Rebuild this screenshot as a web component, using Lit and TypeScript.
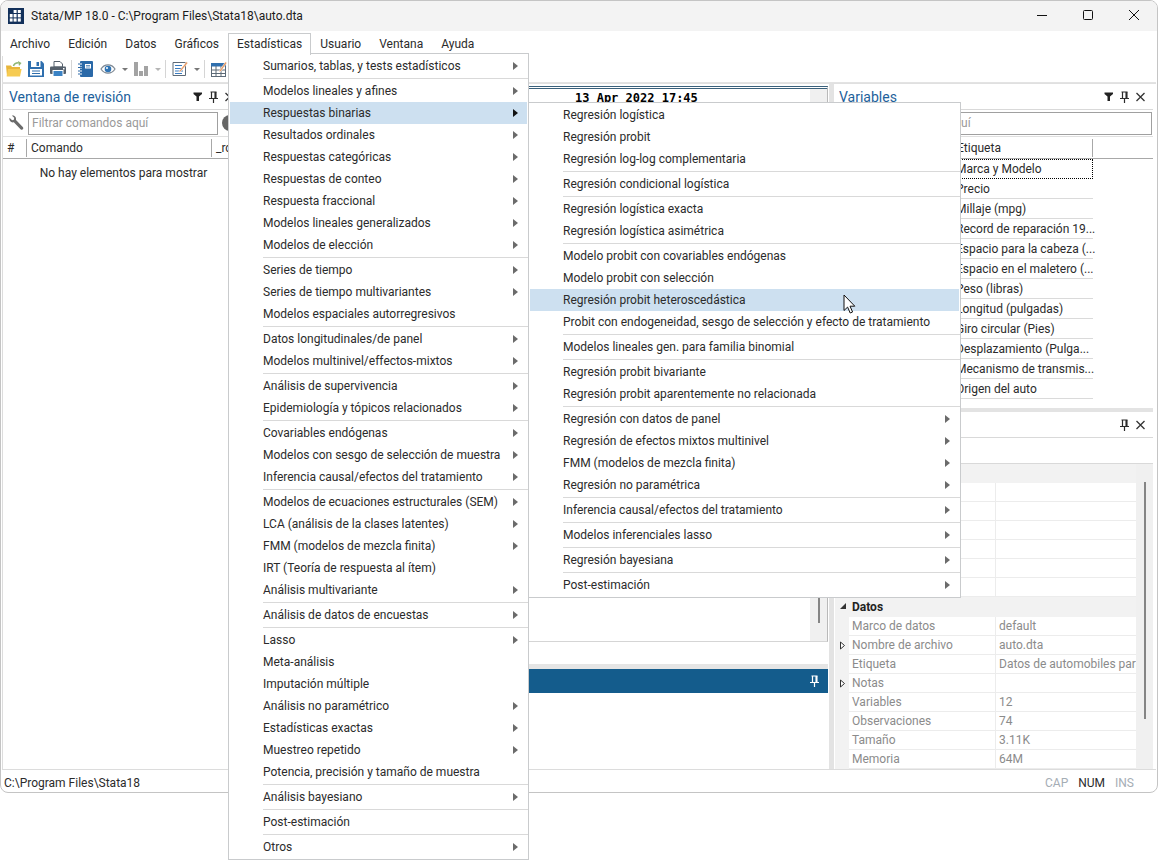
import { LitElement, html, css, svg, nothing } from "lit";
import { customElement, property } from "lit/decorators.js";
import { classMap } from "lit/directives/class-map.js";

interface Entry {
  label: string;
  sub?: boolean;
  active?: boolean;
  children?: Group[];
  pointer?: boolean;
}
type Group = Entry[];

/* A trailing ">" marks an entry that opens a submenu. */
const group = (...labels: string[]): Group =>
  labels.map((l) => (l.endsWith(">") ? { label: l.slice(0, -1), sub: true } : { label: l }));

const binaryMenu: Group[] = [
  group("Regresión logística", "Regresión probit", "Regresión log-log complementaria"),
  group("Regresión condicional logística"),
  group("Regresión logística exacta", "Regresión logística asimétrica"),
  [
    { label: "Modelo probit con covariables endógenas" },
    { label: "Modelo probit con selección" },
    { label: "Regresión probit heteroscedástica", active: true, pointer: true },
    { label: "Probit con endogeneidad, sesgo de selección y efecto de tratamiento" },
  ],
  group("Modelos lineales gen. para familia binomial"),
  group("Regresión probit bivariante", "Regresión probit aparentemente no relacionada"),
  group(
    "Regresión con datos de panel>",
    "Regresión de efectos mixtos multinivel>",
    "FMM (modelos de mezcla finita)>",
    "Regresión no paramétrica>"
  ),
  group("Inferencia causal/efectos del tratamiento>"),
  group("Modelos inferenciales lasso>"),
  group("Regresión bayesiana>"),
  group("Post-estimación>"),
];

const statisticsMenu: Group[] = [
  group("Sumarios, tablas, y tests estadísticos>"),
  [
    { label: "Modelos lineales y afines", sub: true },
    { label: "Respuestas binarias", sub: true, active: true, children: binaryMenu },
    ...group(
      "Resultados ordinales>",
      "Respuestas categóricas>",
      "Respuestas de conteo>",
      "Respuesta fraccional>",
      "Modelos lineales generalizados>",
      "Modelos de elección>"
    ),
  ],
  group("Series de tiempo>", "Series de tiempo multivariantes>", "Modelos espaciales autorregresivos"),
  group("Datos longitudinales/de panel>", "Modelos multinivel/effectos-mixtos>"),
  group("Análisis de supervivencia>", "Epidemiología y tópicos relacionados>"),
  group(
    "Covariables endógenas>",
    "Modelos con sesgo de selección de muestra>",
    "Inferencia causal/efectos del tratamiento>"
  ),
  group(
    "Modelos de ecuaciones estructurales (SEM)>",
    "LCA (análisis de la clases latentes)>",
    "FMM (modelos de mezcla finita)>",
    "IRT (Teoría de respuesta al ítem)",
    "Análisis multivariante>"
  ),
  group("Análisis de datos de encuestas>"),
  group(
    "Lasso>",
    "Meta-análisis",
    "Imputación múltiple",
    "Análisis no paramétrico>",
    "Estadísticas exactas>",
    "Muestreo repetido>",
    "Potencia, precisión y tamaño de muestra"
  ),
  group("Análisis bayesiano>"),
  group("Post-estimación"),
  group("Otros>"),
];

const variableLabels = [
  "Marca y Modelo",
  "Precio",
  "Millaje (mpg)",
  "Record de reparación 19...",
  "Espacio para la cabeza (...",
  "Espacio en el maletero (...",
  "Peso (libras)",
  "Longitud (pulgadas)",
  "Giro circular (Pies)",
  "Desplazamiento (Pulga...",
  "Mecanismo de transmis...",
  "Origen del auto",
];

const dataProps: { name: string; value: string; nested?: boolean }[] = [
  { name: "Marco de datos", value: "default" },
  { name: "Nombre de archivo", value: "auto.dta", nested: true },
  { name: "Etiqueta", value: "Datos de automobiles para" },
  { name: "Notas", value: "", nested: true },
  { name: "Variables", value: "12" },
  { name: "Observaciones", value: "74" },
  { name: "Tamaño", value: "3.11K" },
  { name: "Memoria", value: "64M" },
];

const icon = (body: unknown, w = 16, h = 16) =>
  html`<svg width=${w} height=${h} viewBox="0 0 ${w} ${h}" aria-hidden="true">${body}</svg>`;

const icons = {
  logo: icon(svg`<rect width="16" height="16" fill="#12305a"/>
    <g fill="#fff"><rect x="5.6" y="2" width="3" height="3"/><rect x="9.8" y="2" width="3" height="3"/>
    <rect x="1.8" y="6" width="2.8" height="3.4"/><rect x="5.6" y="6" width="3" height="3.4"/><rect x="9.8" y="6" width="3" height="3.4"/>
    <rect x="1.8" y="10.4" width="2.8" height="3.2"/><rect x="5.6" y="10.4" width="3" height="3.2"/><rect x="9.8" y="10.4" width="3" height="3.2"/></g>`),
  minimize: icon(svg`<path d="M3 7.500h10" stroke="#111"/>`),
  maximize: icon(svg`<rect x="3.500" y="2.500" width="9" height="9" rx="1" fill="none" stroke="#111"/>`),
  close: icon(svg`<path d="M3 2l10 10M13 2L3 12" stroke="#111"/>`),
  open: icon(svg`<path d="M0 4.500h5l1 1.500h8v9H1z" fill="#e8b53a"/><path d="M2 8h13.600L14 15.600H.6z" fill="#f6cb52"/>
    <path d="M7.500 5c.6-2.400 2.500-3.200 5-3.200" stroke="#8fb573" stroke-width="1.600" fill="none"/><path d="M12 0l3.500 2-2.500 3z" fill="#8fb573"/>`),
  save: icon(svg`<path d="M0 0h13.500L16 2.500V16H0z" fill="#2f6fae"/><rect x="3" y="0" width="9.500" height="6" fill="#fff"/><rect x="8.500" y="1" width="2.500" height="4" fill="#2f6fae"/>
    <rect x="2" y="8" width="12" height="6.500" fill="#fff"/><path d="M4 10h8M4 12.500h8" stroke="#2f6fae"/>`),
  print: icon(svg`<path d="M4 .5h6l2.500 2.500V6H4z" fill="#fff" stroke="#55606c"/><rect x="0" y="5.500" width="16" height="7.500" rx="1" fill="#55606c"/>
    <rect x="3" y="9.500" width="10" height="6" fill="#3a82c4" stroke="#fff"/><rect x="13" y="7" width="1.500" height="1.500" fill="#fff"/>`),
  log: icon(svg`<rect x="2" y="0" width="13" height="16" rx="1" fill="#2a69a8"/><rect x="7" y="3" width="6" height="4.500" fill="#fff"/><path d="M8 4.500h4M8 6h4" stroke="#2a69a8" stroke-width=".7"/>
    <path d="M0 3h4M0 6.500h4M0 10h4M0 13h4" stroke="#fff" stroke-width="2"/><path d="M0 3h4M0 6.500h4M0 10h4M0 13h4" stroke="#2a69a8"/>`),
  eye: icon(svg`<path d="M1 8c3.500-5.500 10.500-5.500 14 0-3.500 5.500-10.500 5.500-14 0z" fill="#fff" stroke="#7e8994" stroke-width="1.200"/><circle cx="8" cy="8" r="3.300" fill="#2f74b5"/><circle cx="7" cy="7" r="1" fill="#fff"/>`),
  chart: icon(svg`<path d="M1 1h4v14H1zM6 10h4v5H6zM11 5h4v10h-4z" fill="#a3a3a3"/>`),
  edit: icon(svg`<path d="M1 1.500h12.500v13H1z" fill="#fff" stroke="#5d6a77"/><path d="M3 4.500h7M3 7.500h8M3 10h8M3 12.500h7" stroke="#3a7cc0"/><path d="M7.500 9.500L14.500 .7l1.400 1.200L8.800 10.500l-2.200.8z" fill="#e99a62" stroke="#fff" stroke-width=".5"/>`),
  grid: icon(svg`<rect x=".5" y="2.500" width="14" height="13" fill="#fff" stroke="#5d6a77"/><path d="M0 2h15v3.500H0z" fill="#2f6fae"/><path d="M.5 9h14M.5 12.500h14M5 5v10M10 5v10" stroke="#5d6a77"/><path d="M8.500 9.500L14.500 .7l1.400 1.200L10 10.300l-2 .8z" fill="#e99a62" stroke="#fff" stroke-width=".5"/>`),
  wrench: icon(svg`<path d="M1.500 2.800l2.600 2.400 1.800-.5.300-1.900L3.800.6C6 0 8.600 1.600 8 5l7 7.200c1 1.500-.8 3.300-2.200 2.200L5.800 7.300C3 8 .8 5.500 1.500 2.800z" fill="#6b6b6b"/>`),
  filter: icon(svg`<path d="M1.500 1.500h8.500v1.500L7 5.500V10H4.500V5.500L1.500 3z" fill="#222"/>`, 11, 12),
  pin: icon(svg`<path d="M2.500 1h6M3.500 1v6M7.500 1v6M1 7.500h9M5.500 8v4" fill="none" stroke="currentColor" stroke-width="1.200"/><path d="M6.500 1h2v6h-2z" fill="currentColor"/>`, 11, 12),
  cross: icon(svg`<path d="M1.500 2l8 8M9.500 2l-8 8" stroke="#333" stroke-width="1.300"/>`, 11, 12),
  closed: icon(svg`<path d="M1.500 1v7l4-3.500z" fill="#fff" stroke="#333"/>`, 8, 9),
  opened: icon(svg`<path d="M7 1v6H1z" fill="#333"/>`, 8, 9),
};

const base = css`
  * { box-sizing: border-box; }
  button {
    font: inherit;
    color: inherit;
    background: none;
    border: 0;
    margin: 0;
    padding: 0;
    text-align: left;
    white-space: nowrap;
  }
  svg { display: block; flex: none; }
`;

@customElement("menu-list")
class MenuList extends LitElement {
  @property({ attribute: false }) groups: Group[] = [];

  static styles = [
    base,
    css`
      :host {
        display: block;
        background: #fff;
        border: 1px solid #c9cbcd;
        padding: 1px 0;
        color: #2b2b2b;
      }
      .group + .group::before {
        content: "";
        display: block;
        height: 1px;
        margin: 1px 0 1px 34px;
        background: #d9d9d9;
      }
      .slot { position: relative; padding: 0 1px; }
      .item {
        display: flex;
        align-items: center;
        justify-content: space-between;
        width: 100%;
        height: 22px;
        padding: 0 9px 0 33px;
      }
      .item.active { background: #cde0f0; }
      .arrow {
        border: 4px solid transparent;
        border-left: 5px solid #6b6b6b;
        border-right: 0;
      }
      .active .arrow { border-left-color: #111; }
      .child { position: absolute; z-index: 2; top: 0; left: 100%; width: 433px; }
      .pointer { position: absolute; top: 5px; left: 314px; }
    `,
  ];

  render() {
    return this.groups.map(
      (g) => html`<div class="group" role="group">
        ${g.map(
          (e) => html`<div class="slot">
            <button class=${classMap({ item: true, active: !!e.active })} role="menuitem">
              <span>${e.label}</span>
              ${e.sub ? html`<span class="arrow"></span>` : nothing}
            </button>
            ${e.children ? html`<menu-list class="child" role="menu" .groups=${e.children}></menu-list>` : nothing}
            ${e.pointer
              ? html`<svg class="pointer" width="13" height="20" viewBox="0 0 13 20" aria-hidden="true">
                  <path d="M1 1v15.500l3.600-3.400 2.600 5.900 2.400-1-2.600-5.800h4.800z" fill="#fff" stroke="#111" />
                </svg>`
              : nothing}
          </div>`
        )}
      </div>`
    );
  }
}

@customElement("app-root")
class AppRoot extends LitElement {
  static styles = [
    base,
    css`
      :host {
        display: block;
        min-height: 100vh;
        background: #fff;
        font: 12px/16px Roboto, "Open Sans", sans-serif;
        color: #2b2b2b;
      }
      .window {
        display: flex;
        flex-direction: column;
        height: calc(100vh - 67px);
        min-height: 620px;
        border: 1px solid #c4c4c4;
        border-radius: 8px;
      }
      .titlebar {
        display: flex;
        align-items: center;
        height: 30px;
        padding: 0 7px;
        gap: 7px;
        background: #f3f3f3;
        border-radius: 7px 7px 0 0;
        color: #1b1b1b;
      }
      .title { flex: 1; }
      .winbuttons { display: flex; gap: 30px; padding-right: 8px; }
      .menubar { display: flex; height: 25px; padding-top: 2px; }
      .top { position: relative; }
      .top > button { height: 22px; padding: 0 9px; }
      .top.open > button {
        position: relative;
        z-index: 3;
        padding: 0 8px 1px;
        border: 1px solid #c9cbcd;
        border-bottom: 0;
        background: #fff;
      }
      .dropdown { position: absolute; z-index: 2; top: 20px; left: 0; width: 301px; }
      .toolbar {
        display: flex;
        align-items: center;
        height: 27px;
        margin: 0 1px;
        border-left: 1px solid #ddd;
        border-bottom: 1px solid #e3e3e3;
      }
      .tool { display: grid; place-items: center; width: 22px; height: 22px; }
      .caret { border: 3px solid transparent; border-top-color: #777; border-bottom: 0; margin: 0 2px 0 3px; }
      .caret.dim { border-top-color: #b5b5b5; }
      .rule { width: 1px; height: 18px; margin: 0 3px 0 2px; background: #d5d5d5; }

      .body {
        flex: 1;
        min-height: 0;
        display: grid;
        grid-template-columns: 242px minmax(0, 1fr) 327px;
        margin: 0 1px;
        border-bottom: 1px solid #dcdcdc;
      }
      .panel { min-width: 0; min-height: 0; display: flex; flex-direction: column; border-top: 1px solid #e0e0e0; }
      .left { border-left: 1px solid #ddd; }
      .phead {
        flex: none;
        display: flex;
        align-items: center;
        gap: 5px;
        height: 26px;
        padding: 0 9px 0 6px;
        border-bottom: 1px solid #d9d9d9;
      }
      .phead h2 { flex: 1; margin: 0; font-size: 14px; line-height: 18px; font-weight: 400; color: #1d619b; }
      .filterbar {
        flex: none;
        display: flex;
        align-items: center;
        gap: 4px;
        height: 27px;
        padding: 0 5px;
        border-bottom: 1px solid #e0e0e0;
      }
      .right .filterbar { padding-right: 1px; }
      .filterbar input {
        flex: 1;
        min-width: 0;
        height: 23px;
        padding: 0 3px;
        border: 1px solid #a0a0a0;
        font: inherit;
      }
      input::placeholder { color: #9a9a9a; opacity: 1; }
      .search { width: 16px; height: 16px; border-radius: 8px; background: #666; margin-right: 1px; }
      table { border-collapse: separate; border-spacing: 0; table-layout: fixed; width: 100%; }
      th, td { padding: 0; font-weight: 400; text-align: left; white-space: nowrap; overflow: hidden; }
      .cols th { height: 22px; padding-left: 4px; border-bottom: 1px solid #a8a8a8; }
      .cols th:not(:last-child) {
        background: linear-gradient(#a8a8a8, #a8a8a8) right 2px / 1px 18px no-repeat;
      }
      .history .n { width: 24px; }
      .history .cmd { width: 185px; }
      .empty { margin: 0; padding: 6px 0; text-align: center; }

      .center {
        display: flex;
        flex-direction: column;
        min-width: 0;
        padding: 2px 1px 0 0;
        border-top: 1px solid #e0e0e0;
      }
      .results {
        flex: 1;
        min-height: 0;
        display: flex;
        justify-content: space-between;
        border-top: 3px double #3b617c;
        border-right: 1px solid #b9b9b9;
        border-bottom: 1px solid #d5d5d5;
        padding-left: 331px;
      }
      .results pre { margin: 1px 0; font: bold 12px/16px "DejaVu Sans Mono", monospace; color: #000; }
      .track { display: flex; justify-content: center; width: 17px; background: #f0f0f0; }
      .thumb { width: 2px; background: #858585; margin: 14px 0 18px; }
      .gap { height: 22px; }
      .split { height: 5px; background: #e5e5e5; }
      .command {
        height: 24px;
        display: flex;
        align-items: center;
        justify-content: flex-end;
        padding-right: 8px;
        background: #145c8c;
        color: #fff;
      }
      .entry { height: 76px; border: 0; padding: 0; resize: none; outline: none; }

      .right { border-left: 5px solid #e3e3e3; padding-right: 3px; }
      .right .phead { padding: 0 7px 0 5px; }
      .vars { flex: 1 1 249px; min-height: 0; overflow: hidden; }
      .vars .name { width: 119px; }
      .vars .label { width: 140px; }
      .vars td { height: 20px; padding-left: 3px; border-bottom: 1px solid #dadada; overflow: visible; }
      .vars td:last-child { border: 0; }
      .vars .selected td { border: 1px dotted #000; border-left: 0; }
      .vars .selected td:first-child { border-right: 0; }
      .vars .selected td:last-child { border: 0; }
      .splitter { flex: none; height: 4px; background: #e3e3e3; }
      .lockbar { flex: none; height: 26px; border-bottom: 1px solid #d9d9d9; }
      .propbox { flex: none; display: flex; height: 305px; margin-left: 1px; }
      .props { flex: 1; min-width: 0; color: #8b8b8b; }
      .props .gutter { width: 14px; background: #f2f2f2; border: 0; padding-left: 4px; }
      .props .pname { width: 147px; }
      .props td { height: 19px; padding-left: 3px; border-bottom: 1px solid #ececec; }
      .props td + td { border-right: 1px solid #ececec; }
      .props td:last-child { border-right: 0; }
      .props .section td, .props .section th { height: 19px; background: #f2f2f2; border: 0; font-weight: 700; color: #222; padding-left: 3px; }
      .props .section td.gutter { padding-left: 4px; }
      .propbox .thumb { margin: 18px 0 50px; }

      .status { display: flex; align-items: center; gap: 10px; height: 22px; padding: 3px 23px 0 3px; }
      .status .path { flex: 1; }
      .off { color: #a5adb5; }
    `,
  ];

  private tool(name: string, glyph: unknown) {
    return html`<button class="tool" aria-label=${name}>${glyph}</button>`;
  }

  private menu(label: string) {
    return html`<div class="top"><button>${label}</button></div>`;
  }

  render() {
    return html`<main class="window">
      <header class="titlebar">
        ${icons.logo}
        <span class="title">Stata/MP 18.0 - C:\\Program Files\\Stata18\\auto.dta</span>
        <div class="winbuttons">
          <button aria-label="Minimizar">${icons.minimize}</button>
          <button aria-label="Maximizar">${icons.maximize}</button>
          <button aria-label="Cerrar">${icons.close}</button>
        </div>
      </header>
      <nav class="menubar">
        ${["Archivo", "Edición", "Datos", "Gráficos"].map(this.menu)}
        <div class="top open">
          <button aria-expanded="true">Estadísticas</button>
          <menu-list class="dropdown" role="menu" .groups=${statisticsMenu}></menu-list>
        </div>
        ${["Usuario", "Ventana", "Ayuda"].map(this.menu)}
      </nav>
      <div class="toolbar">
        ${this.tool("Abrir", icons.open)} ${this.tool("Guardar", icons.save)} ${this.tool("Imprimir", icons.print)}
        <span class="rule"></span>
        ${this.tool("Log", icons.log)} ${this.tool("Visor", icons.eye)}<span class="caret"></span>
        ${this.tool("Gráfico", icons.chart)}<span class="caret dim"></span>
        <span class="rule"></span>
        ${this.tool("Editor", icons.edit)}<span class="caret"></span>
        <span class="rule"></span>
        ${this.tool("Datos", icons.grid)}
      </div>
      <div class="body">
        <section class="panel left">
          <div class="phead">
            <h2>Ventana de revisión</h2>
            <button aria-label="Filtro">${icons.filter}</button>
            <button aria-label="Fijar">${icons.pin}</button>
            <button aria-label="Cerrar">${icons.cross}</button>
          </div>
          <div class="filterbar">
            ${icons.wrench}
            <input type="text" aria-label="Filtrar comandos" placeholder="Filtrar comandos aquí" />
            <span class="search"></span>
          </div>
          <table class="history">
            <thead>
              <tr class="cols"><th class="n">#</th><th class="cmd">Comando</th><th>_rc</th></tr>
            </thead>
          </table>
          <p class="empty">No hay elementos para mostrar</p>
        </section>
        <section class="center">
          <div class="results">
            <pre>13 Apr 2022 17:45</pre>
            <div class="track"><div class="thumb"></div></div>
          </div>
          <div class="gap"></div>
          <div class="split"></div>
          <div class="command"><button aria-label="Fijar">${icons.pin}</button></div>
          <textarea class="entry" aria-label="Comando"></textarea>
        </section>
        <section class="panel right">
          <div class="phead">
            <h2>Variables</h2>
            <button aria-label="Filtro">${icons.filter}</button>
            <button aria-label="Fijar">${icons.pin}</button>
            <button aria-label="Cerrar">${icons.cross}</button>
          </div>
          <div class="filterbar">
            ${icons.wrench}
            <input type="text" aria-label="Filtrar variables" placeholder="Filtrar variables aquí" />
          </div>
          <div class="vars">
            <table>
              <thead>
                <tr class="cols"><th class="name"></th><th class="label">Etiqueta</th><th></th></tr>
              </thead>
              <tbody>
                ${variableLabels.map(
                  (l, i) => html`<tr class=${classMap({ selected: i === 0 })}><td></td><td>${l}</td><td></td></tr>`
                )}
              </tbody>
            </table>
          </div>
          <div class="splitter"></div>
          <div class="phead">
            <h2></h2>
            <button aria-label="Fijar">${icons.pin}</button>
            <button aria-label="Cerrar">${icons.cross}</button>
          </div>
          <div class="lockbar"></div>
          <div class="propbox">
            <table class="props">
              <colgroup><col class="gutter" /><col class="pname" /><col /></colgroup>
              <tbody>
                <tr class="section"><td class="gutter"></td><td colspan="2"></td></tr>
                ${[0, 1, 2, 3, 4, 5].map(() => html`<tr><td class="gutter"></td><td></td><td></td></tr>`)}
                <tr class="section"><td class="gutter">${icons.opened}</td><th colspan="2">Datos</th></tr>
                ${dataProps.map(
                  (p) => html`<tr>
                    <td class="gutter">${p.nested ? icons.closed : nothing}</td>
                    <td>${p.name}</td>
                    <td>${p.value}</td>
                  </tr>`
                )}
              </tbody>
            </table>
            <div class="track"><div class="thumb"></div></div>
          </div>
        </section>
      </div>
      <footer class="status">
        <span class="path">C:\\Program Files\\Stata18</span>
        <span class="off">CAP</span><span>NUM</span><span class="off">INS</span>
      </footer>
    </main>`;
  }
}
